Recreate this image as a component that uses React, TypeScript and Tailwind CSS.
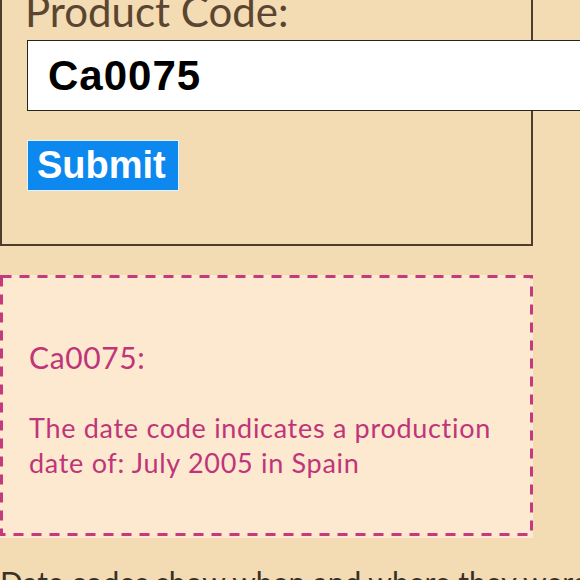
export default function App() {
  return (
    <main className="h-[580px] w-[580px] overflow-hidden bg-[#f3dcb3]">
      <section className="-mt-[14px] w-[533px] border-2 border-t-0 border-[#4e3d2b] pb-[53px] pl-[25px]">
        <label className="-ml-[2px] block font-['Lato',sans-serif] text-[42px] leading-[50px] text-[#5a4530]">
          Product Code:
        </label>
        <div className="mt-[4px] flex h-[71px] w-[600px] items-center border-[1.5px] border-[#2a2420] bg-white pl-[20px] font-['Liberation_Sans',Arial,sans-serif] text-[42px] font-bold tracking-[1px] text-black">
          Ca0075
        </div>
        <button className="mt-[29px] flex h-[51px] w-[152px] items-center border border-[#dff3ff] bg-[#0c88ee] pl-[9px] font-['Liberation_Sans',Arial,sans-serif] text-[38px] font-bold text-white">
          Submit
        </button>
      </section>

      <section className="relative mt-[29px] w-[533px] bg-[#fde9cf] pb-[58px] pl-[29px] pt-[64px] font-['Lato',sans-serif] text-[#c0357a]">
        <svg className="pointer-events-none absolute inset-0 h-full w-full" preserveAspectRatio="none">
          <rect
            x="1.5"
            y="1.5"
            width="530"
            height="258"
            fill="none"
            stroke="#c43a7c"
            strokeWidth="3"
            strokeDasharray="10 8"
          />
        </svg>
        <h2 className="text-[30px] leading-[36px] tracking-[0.6px]">Ca0075:</h2>
        <p className="mt-[35px] pr-[30px] text-[27px] leading-[35px] tracking-[0.7px]">
          The date code indicates a production date of: July 2005 in Spain
        </p>
      </section>

      <p className="mt-[26px] whitespace-nowrap font-['Lato',sans-serif] text-[30px] leading-[36px] text-[#3a3028]">
        Date codes show when and where they were made
      </p>
    </main>
  );
}
